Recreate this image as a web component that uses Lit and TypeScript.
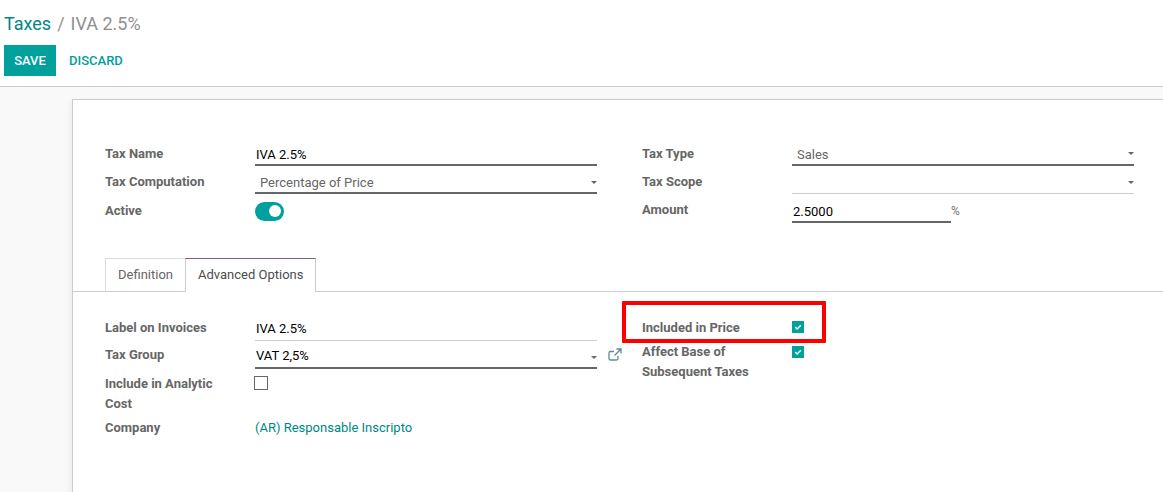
import { LitElement, html, css } from "lit";
import { customElement } from "lit/decorators.js";

const caret = html`<span class="caret"></span>`;
const check = html`<span class="check on"><svg width="12" height="12" viewBox="0 0 12 12"><path d="M3.200 6.200 5.200 8 8.800 4.300" fill="none" stroke="#fff" stroke-width="1.600"/></svg></span>`;

@customElement("app-root")
export class AppRoot extends LitElement {
  static styles = css`
    :host { display: block; width: 1163px; height: 492px; overflow: hidden; background: #f9f9f9; font-family: Roboto, "Liberation Sans", sans-serif; font-size: 13px; color: #4c4c4c; position: relative; }
    .head { box-sizing: border-box; background: #fff; border-bottom: 1px solid #ccc; height: 87px; padding: 13px 4px 0; }
    .crumbs { font-size: 18px; line-height: 22px; color: #8f8f8f; display: flex; gap: 6px; }
    .crumbs a { color: #008784; }
    .btns { display: flex; margin-top: 10px; align-items: center; }
    .save { width: 52px; height: 31px; background: #00a09d; color: #fff; font-weight: 500; display: flex; align-items: center; justify-content: center; }
    .discard { color: #00a09d; font-weight: 500; margin-left: 13px; }
    .sheet { margin: 12px 0 0 72px; width: 1200px; height: 420px; box-sizing: border-box; background: #fff; border: 1px solid #ccc; box-shadow: -2px 2px 6px rgba(0,0,0,.05); padding-top: 40px; }
    .cols { display: flex; padding-left: 32px; }
    .cols.lower { padding-top: 26px; }
    .col { width: 537px; flex: none; }
    .row { display: flex; }
    .r1 { height: 26px; }
    .r2 { height: 29px; }
    .r-label { height: 27px; }
    .r-analytic { height: 44px; }
    .r-included { height: 24px; }
    .lab { width: 150px; flex: none; font-weight: 700; color: #666; line-height: 20px; box-sizing: border-box; }
    .d4 { margin-top: 4px; }
    .d5 { margin-top: 5px; }
    .d6 { margin-top: 6px; }
    .wrap { padding-right: 30px; }
    .val { width: 342px; flex: none; box-sizing: border-box; position: relative; color: #000; }
    .field { height: 27px; line-height: 18px; padding-top: 7px; box-sizing: border-box; border-bottom: 2px solid #666; }
    .up { margin-top: -1px; }
    .second { margin-top: 2px; height: 26px; padding-top: 6px; }
    .thin { border-bottom: 1px solid #ccc; height: 25px; }
    .second.thin { height: 26px; }
    .sel { padding-left: 5px; color: #666; }
    .blk { padding-left: 1px; color: #000; }
    .caret { position: absolute; right: 0; top: 13px; border: 3px solid transparent; border-top-color: #666; border-bottom: 0; }
    .toggle { width: 29px; height: 19px; border-radius: 10px; background: #00a09d; position: relative; display: block; margin-top: 7px; }
    .toggle::after { content: ""; position: absolute; left: 14px; top: 3px; width: 12px; height: 12px; background: #fff; border-radius: 50%; }
    .amount { display: flex; }
    .amount .field { width: 159px; margin-top: 1px; }
    .pct { color: #777; font-size: 12px; margin-top: 7px; line-height: 18px; }
    .tabs { display: flex; margin-top: 35px; padding-left: 32px; border-bottom: 1px solid #ccc; height: 33px; }
    .tab { height: 33px; box-sizing: border-box; line-height: 31px; border: 1px solid #ddd; border-bottom: 0; padding: 0 12px; color: #666; margin-right: -1px; }
    .tab.active { color: #4c4c4c; background: #fff; height: 34px; border-color: #ccc; border-top-color: #875a7b; position: relative; }
    .check { width: 12px; height: 12px; display: block; }
    .check.on { background: #00a09d; }
    .check.off { width: 14px; height: 14px; box-sizing: border-box; border: 1px solid #666; margin-top: 2px; margin-left: -1px; }
    .ext { position: absolute; left: 352px; top: 5px; }
    .link { color: #008784; line-height: 20px; }
    .label-val { margin-top: -2px; padding-top: 4px; }
    .group-val { margin-top: -2px; height: 26px; padding-top: 4px; }
    .top3 { padding-top: 3px; }
    .top4 { padding-top: 4px; }
    .redbox { position: absolute; left: 622px; top: 301px; width: 204px; height: 42px; box-sizing: border-box; border: 4px solid #f00; border-radius: 1px; }
  `;

  render() {
    return html`
      <div class="head">
        <div class="crumbs"><a>Taxes</a><span>/</span><span>IVA 2.5%</span></div>
        <div class="btns"><div class="save">SAVE</div><div class="discard">DISCARD</div></div>
      </div>
      <div class="sheet">
        <div class="cols">
          <div class="col">
            <div class="row r1"><div class="lab d4">Tax Name</div><div class="val field blk up">IVA 2.5%</div></div>
            <div class="row r2"><div class="lab d6">Tax Computation</div><div class="val field sel second">Percentage of Price${caret}</div></div>
            <div class="row"><div class="lab d6">Active</div><div class="val"><span class="toggle"></span></div></div>
          </div>
          <div class="col">
            <div class="row r1"><div class="lab d4">Tax Type</div><div class="val field sel up">Sales${caret}</div></div>
            <div class="row r2"><div class="lab d6">Tax Scope</div><div class="val field second thin">${caret}</div></div>
            <div class="row"><div class="lab d5">Amount</div><div class="val amount"><div class="field blk">2.5000</div><span class="pct">%</span></div></div>
          </div>
        </div>
        <div class="tabs">
          <div class="tab">Definition</div>
          <div class="tab active">Advanced Options</div>
        </div>
        <div class="cols lower">
          <div class="col">
            <div class="row r-label"><div class="lab">Label on Invoices</div><div class="val field thin blk label-val">IVA 2.5%</div></div>
            <div class="row r2"><div class="lab">Tax Group</div><div class="val field blk group-val">VAT 2,5%${caret}
              <svg class="ext" width="16" height="14" viewBox="0 0 16 14"><path d="M11 8v2.500a1.500 1.500 0 0 1-1.500 1.500H3.500a1.500 1.500 0 0 1-1.500-1.500V5a1.500 1.500 0 0 1 1.500-1.500H7M9.500 1h4.500v4.500M14 1 7.500 7.500" fill="none" stroke="#5f8a94" stroke-width="1.300"/></svg></div></div>
            <div class="row r-analytic"><div class="lab wrap">Include in Analytic Cost</div><div class="val"><span class="check off"></span></div></div>
            <div class="row"><div class="lab">Company</div><div class="val link">(AR) Responsable Inscripto</div></div>
          </div>
          <div class="col">
            <div class="row r-included"><div class="lab">Included in Price</div><div class="val top3">${check}</div></div>
            <div class="row"><div class="lab">Affect Base of<br />Subsequent Taxes</div><div class="val top4">${check}</div></div>
          </div>
        </div>
      </div>
      <div class="redbox"></div>
    `;
  }
}
